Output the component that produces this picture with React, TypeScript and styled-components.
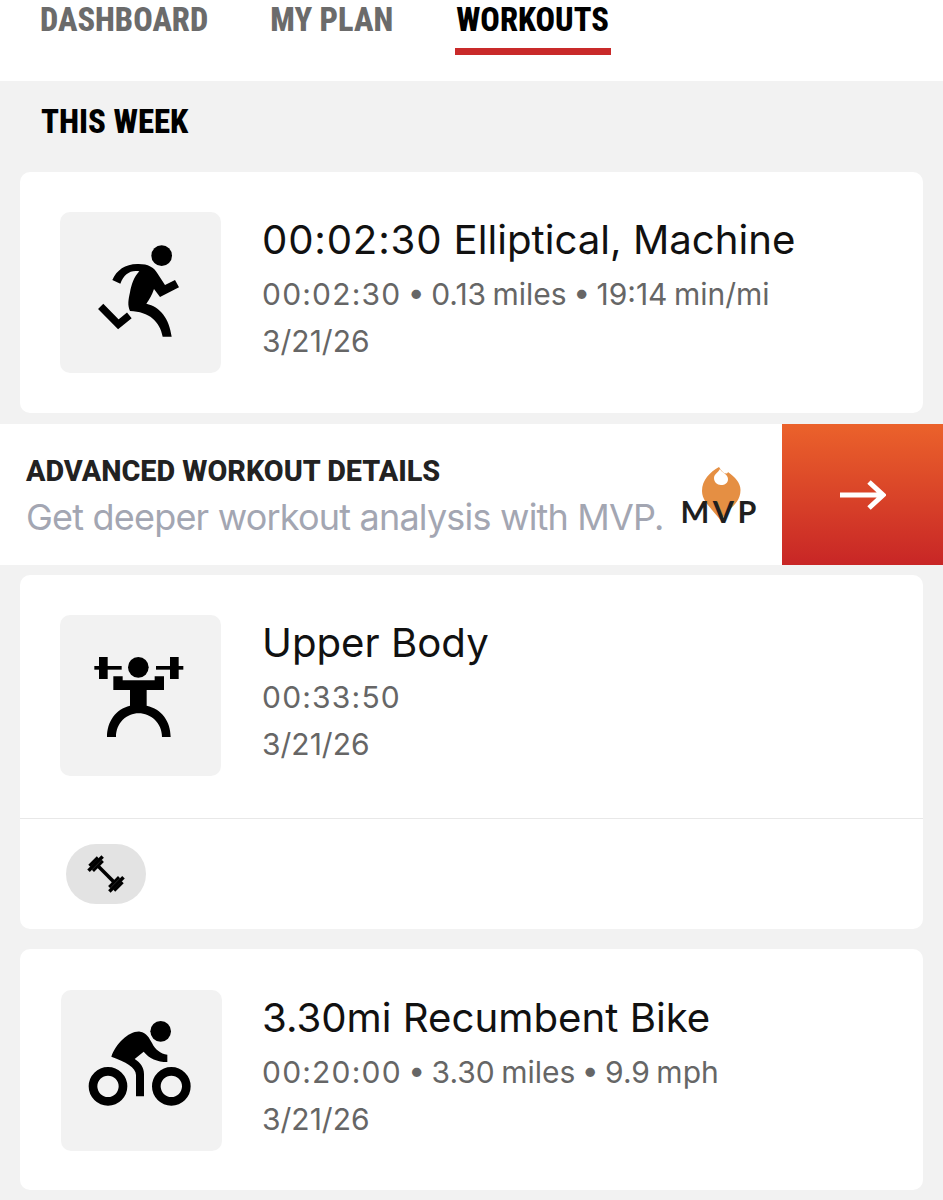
import React from 'react';
import styled, { createGlobalStyle } from 'styled-components';

const GlobalStyle = createGlobalStyle`
  html, body {
    margin: 0;
    padding: 0;
    background: #f2f2f2;
  }
  body {
    font-family: "Inter", "Liberation Sans", sans-serif;
  }
`;

const Page = styled.div`
  width: 943px;
  height: 1200px;
  overflow: hidden;
  background: #f2f2f2;
`;

const Nav = styled.nav`
  height: 81px;
  background: #fff;
  display: flex;
  gap: 60px;
  padding-left: 39px;
  box-sizing: border-box;
`;

const NavItem = styled.div<{ $active?: boolean }>`
  height: 55px;
  box-sizing: border-box;
  padding: 2px ${p => (p.$active ? 2 : 1)}px 0 1px;
  margin-left: ${p => (p.$active ? 1 : 0)}px;
  font-family: "Roboto", "Liberation Sans", sans-serif;
  font-stretch: 75%;
  font-weight: 800;
  font-size: 32.4px;
  line-height: 36px;
  color: ${p => (p.$active ? '#000' : '#6b6b6b')};
  border-bottom: 7px solid ${p => (p.$active ? '#c92a2a' : 'transparent')};
`;

const SectionTitle = styled.h2`
  margin: 0;
  height: 91px;
  padding: 23px 0 0 41px;
  box-sizing: border-box;
  font-family: "Roboto", "Liberation Sans", sans-serif;
  font-stretch: 75%;
  font-weight: 800;
  font-size: 32.8px;
  line-height: 36px;
  color: #000;
`;

const Card = styled.section<{ $gapAfter?: number }>`
  margin: 0 20px ${p => p.$gapAfter ?? 0}px;
  background: #fff;
  border-radius: 10px;
`;

const CardBody = styled.div<{ $tall?: boolean; $shift?: number }>`
  display: flex;
  gap: ${p => 41 - (p.$shift ?? 0)}px;
  height: ${p => (p.$tall ? 243 : 241)}px;
  box-sizing: border-box;
  padding: ${p => 40 + (p.$shift ?? 0)}px 0 0 ${p => 40 + (p.$shift ?? 0)}px;
`;

const Tile = styled.div`
  width: 161px;
  height: 161px;
  flex: none;
  background: #f2f2f2;
  border-radius: 10px;
  svg {
    display: block;
    width: 161px;
    height: 161px;
  }
`;

const Info = styled.div`
  display: flex;
  flex-direction: column;
`;

const Title = styled.div`
  font-size: 40.2px;
  line-height: 56px;
  margin-bottom: 3px;
  color: #111;
`;

const Meta = styled.div`
  font-size: 30px;
  line-height: 47px;
  word-spacing: -2px;
  color: #666;
`;

// the times run a little wider than Inter sets them
const Clock = styled.span<{ $spacing?: number }>`
  letter-spacing: ${p => p.$spacing ?? 1.2}px;
`;

const Banner = styled.div`
  display: flex;
  align-items: stretch;
  height: 141px;
  margin: 11px 0 10px;
  background: #fff;
`;

const BannerText = styled.div`
  flex: 1;
  min-width: 0;
  padding: 31px 0 0 26px;
`;

const BannerHead = styled.div`
  font-family: "Roboto", "Liberation Sans", sans-serif;
  font-weight: 800;
  font-size: 28.8px;
  line-height: 32px;
  color: #222;
`;

const BannerSub = styled.div`
  margin-top: 6px;
  font-size: 36px;
  line-height: 48px;
  letter-spacing: -0.8px;
  color: #a3a6b2;
  white-space: nowrap;
`;

const Logo = styled.div`
  width: 77px;
  margin-right: 25px;
  padding-top: 43px;
  display: flex;
  flex-direction: column;
  align-items: center;
  svg {
    display: block;
    margin-left: 6px;
  }
`;

const LogoWord = styled.div`
  margin-top: -22px;
  font-family: "Lato", "Liberation Sans", sans-serif;
  font-weight: 700;
  font-size: 30.5px;
  line-height: 26px;
  letter-spacing: 3.5px;
  margin-right: -3.5px;
  color: #1f1f1f;
`;

const ArrowButton = styled.div`
  width: 161px;
  display: flex;
  align-items: center;
  justify-content: center;
  background: linear-gradient(180deg, #eb622b 0%, #c82626 100%);
`;

const CardFooter = styled.div`
  height: 111px;
  box-sizing: border-box;
  padding: 25px 0 0 46px;
  border-top: 1px solid #e8e8e8;
`;

const Chip = styled.div`
  width: 80px;
  height: 60px;
  border-radius: 30px;
  background: #e3e3e3;
  display: flex;
  align-items: center;
  justify-content: center;
`;

const RunIcon = () => (
  <svg viewBox="30 21 483 483">
    <circle cx="335" cy="152" r="31" />
    <path d="M187 225C200 195 225 178 262 177C292 176 312 186 322 205L345 240L375 225L387 247L330 276L312 252C306 270 298 283 289 296C330 305 358 340 365 395H338C330 350 298 320 240 318C232 300 235 285 240 262C244 240 252 215 268 199C240 194 222 208 211 236Z" />
    <path d="M152 304L205 358L238 331" fill="none" stroke="#000" strokeWidth="22" />
  </svg>
);

const LifterIcon = () => (
  <svg viewBox="30 16 483 483">
    <circle cx="265" cy="173" r="31" />
    <rect x="133" y="169" width="82" height="11" />
    <rect x="318" y="169" width="82" height="11" />
    <rect x="147" y="142" width="26" height="66" />
    <rect x="360" y="142" width="26" height="66" />
    <path d="M190 200H218V212H314V200H342V241H290V288C335 298 362 335 362 382H336C336 340 302 311 266 311C230 311 198 340 198 382H171C171 335 198 298 240 288V241H190Z" />
  </svg>
);

const BikeIcon = () => (
  <svg viewBox="31 13 483 483">
    <circle cx="330" cy="137" r="31" />
    <circle cx="172" cy="302" r="45" fill="none" stroke="#000" strokeWidth="26" />
    <circle cx="362" cy="302" r="45" fill="none" stroke="#000" strokeWidth="26" />
    <path d="M182 213C195 175 235 135 268 138C288 140 296 158 304 172C312 190 330 205 350 207V229C320 229 295 218 279 198L252 220C270 232 280 245 280 265V332H256V268C256 245 225 228 182 213Z" />
  </svg>
);

const BarbellIcon = () => (
  <svg width="40" height="40" viewBox="0 0 40 40">
    <g transform="rotate(45 20 20)">
      <rect x="8" y="18.200" width="24" height="3.600" />
      <rect x="1" y="14" width="3" height="12" />
      <rect x="3.500" y="10" width="3.500" height="20" />
      <rect x="7" y="13" width="3" height="14" />
      <rect x="30" y="13" width="3" height="14" />
      <rect x="33" y="10" width="3.500" height="20" />
      <rect x="36" y="14" width="3" height="12" />
    </g>
  </svg>
);

const FlameIcon = () => (
  <svg width="39" height="53" viewBox="0 0 39 53">
    <path d="M17 0C8 5 0 13 0 24C0 32 6 38 10 43L18.500 53L27 43C33 38 38.500 32 38.500 23C38.500 16 33 10 26 5C25 8 21 6 19 3Z" fill="#e58f43" />
    <path d="M18 2C19 5 26 7 26 12C26 16 23 18 19 18C15 18 12 15 12 11C12 7 16 6 18 2Z" fill="#fff" />
  </svg>
);

const ArrowIcon = () => (
  <svg width="46" height="30" viewBox="0 0 46 30">
    <path d="M0 15H42M29 2L43 15L29 28" fill="none" stroke="#fff" strokeWidth="5" />
  </svg>
);

const App = () => (
  <Page>
    <GlobalStyle />
    <Nav>
      <NavItem>DASHBOARD</NavItem>
      <NavItem>MY PLAN</NavItem>
      <NavItem $active>WORKOUTS</NavItem>
    </Nav>
    <SectionTitle>THIS WEEK</SectionTitle>

    <Card>
      <CardBody>
        <Tile><RunIcon /></Tile>
        <Info>
          <Title><Clock $spacing={0.8}>00:02:30</Clock> Elliptical, Machine</Title>
          <Meta><Clock>00:02:30</Clock> • 0.13 miles • 19:14 min/mi</Meta>
          <Meta>3/21/26</Meta>
        </Info>
      </CardBody>
    </Card>

    <Banner>
      <BannerText>
        <BannerHead>ADVANCED WORKOUT DETAILS</BannerHead>
        <BannerSub>Get deeper workout analysis with MVP.</BannerSub>
      </BannerText>
      <Logo>
        <FlameIcon />
        <LogoWord>MVP</LogoWord>
      </Logo>
      <ArrowButton><ArrowIcon /></ArrowButton>
    </Banner>

    <Card $gapAfter={20}>
      <CardBody $tall>
        <Tile><LifterIcon /></Tile>
        <Info>
          <Title>Upper Body</Title>
          <Meta><Clock>00:33:50</Clock></Meta>
          <Meta>3/21/26</Meta>
        </Info>
      </CardBody>
      <CardFooter>
        <Chip><BarbellIcon /></Chip>
      </CardFooter>
    </Card>

    <Card>
      <CardBody $shift={1}>
        <Tile><BikeIcon /></Tile>
        <Info>
          <Title>3.30mi Recumbent Bike</Title>
          <Meta><Clock>00:20:00</Clock> • 3.30 miles • 9.9 mph</Meta>
          <Meta>3/21/26</Meta>
        </Info>
      </CardBody>
    </Card>
  </Page>
);

export default App;
